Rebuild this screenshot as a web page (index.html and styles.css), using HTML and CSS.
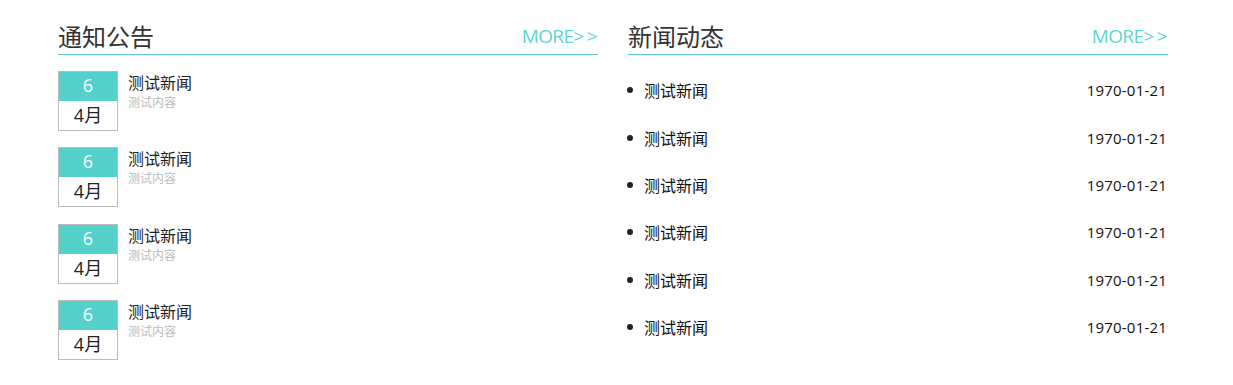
FILE: index.html
```html
<!DOCTYPE html>
<html lang="zh-CN">
<head>
<meta charset="utf-8">
<title>通知公告 新闻动态</title>
<link rel="stylesheet" href="styles.css">
</head>
<body>
<div class="wrap">
  <section class="col">
    <div class="head">
      <h2 class="title">通知公告</h2>
      <a class="more" href="#">MORE&gt;<span class="gt">&gt;</span></a>
    </div>
    <ul class="notices">
      <li class="notice">
        <div class="date-box"><div class="day">6</div><div class="month">4月</div></div>
        <div class="notice-text"><div class="n-title">测试新闻</div><div class="n-sub">测试内容</div></div>
      </li>
      <li class="notice">
        <div class="date-box"><div class="day">6</div><div class="month">4月</div></div>
        <div class="notice-text"><div class="n-title">测试新闻</div><div class="n-sub">测试内容</div></div>
      </li>
      <li class="notice">
        <div class="date-box"><div class="day">6</div><div class="month">4月</div></div>
        <div class="notice-text"><div class="n-title">测试新闻</div><div class="n-sub">测试内容</div></div>
      </li>
      <li class="notice">
        <div class="date-box"><div class="day">6</div><div class="month">4月</div></div>
        <div class="notice-text"><div class="n-title">测试新闻</div><div class="n-sub">测试内容</div></div>
      </li>
    </ul>
  </section>
  <section class="col">
    <div class="head">
      <h2 class="title">新闻动态</h2>
      <a class="more" href="#">MORE&gt;<span class="gt">&gt;</span></a>
    </div>
    <ul class="news">
      <li class="news-item"><span class="dot"></span><span class="news-name">测试新闻</span><span class="news-date">1970-01-21</span></li>
      <li class="news-item"><span class="dot"></span><span class="news-name">测试新闻</span><span class="news-date">1970-01-21</span></li>
      <li class="news-item"><span class="dot"></span><span class="news-name">测试新闻</span><span class="news-date">1970-01-21</span></li>
      <li class="news-item"><span class="dot"></span><span class="news-name">测试新闻</span><span class="news-date">1970-01-21</span></li>
      <li class="news-item"><span class="dot"></span><span class="news-name">测试新闻</span><span class="news-date">1970-01-21</span></li>
      <li class="news-item"><span class="dot"></span><span class="news-name">测试新闻</span><span class="news-date">1970-01-21</span></li>
    </ul>
  </section>
</div>
</body>
</html>
```

FILE: styles.css
```css
* { box-sizing: border-box; }
html, body { margin: 0; padding: 0; background: #fff; }
body {
  font-family: "Open Sans", "Noto Sans CJK SC", sans-serif;
  color: #222;
}
.wrap {
  display: grid;
  grid-template-columns: 540px 540px;
  column-gap: 30px;
  padding: 20px 0 0 58px;
}
.head {
  display: flex;
  justify-content: space-between;
  align-items: flex-start;
  height: 35px;
  border-bottom: 1px solid #5ccdca;
}
.title {
  margin: 0;
  font-size: 24px;
  font-weight: normal;
  line-height: 34px;
  color: #333;
}
.more {
  font-size: 19px;
  line-height: 32px;
  color: #5fd4d0;
  text-decoration: none;
  letter-spacing: -0.6px;
  margin-right: 1px;
}
.gt { margin-left: 3px; }
ul { list-style: none; margin: 0; padding: 0; }

.notices { padding-top: 16px; }
.notice {
  display: flex;
  align-items: flex-start;
  margin-bottom: 16.4px;
}
.date-box {
  width: 60px;
  height: 60px;
  border: 1px solid #bbb;
  text-align: center;
  flex: none;
}
.day {
  height: 29px;
  line-height: 26px;
  background: #55d1cc;
  color: #fff;
  font-size: 18px;
}
.month {
  height: 29px;
  line-height: 29px;
  font-size: 18px;
  color: #222;
}
.notice-text { margin-left: 10px; padding-top: 2px; }
.n-title { font-size: 16px; line-height: 20px; color: #222; }
.n-sub { font-size: 12px; line-height: 20px; color: #bbb; }

.news { margin-top: 11.5px; }
.news-item {
  display: flex;
  align-items: center;
  height: 47.4px;
}
.dot {
  width: 6px;
  height: 6px;
  border-radius: 50%;
  background: #222;
  margin-left: -1px;
  margin-right: 11px;
  flex: none;
}
.news-name { flex: 1; font-size: 16px; color: #111; }
.news-date { font-size: 15px; color: #111; margin-right: 1px; letter-spacing: 0.2px; }
```
